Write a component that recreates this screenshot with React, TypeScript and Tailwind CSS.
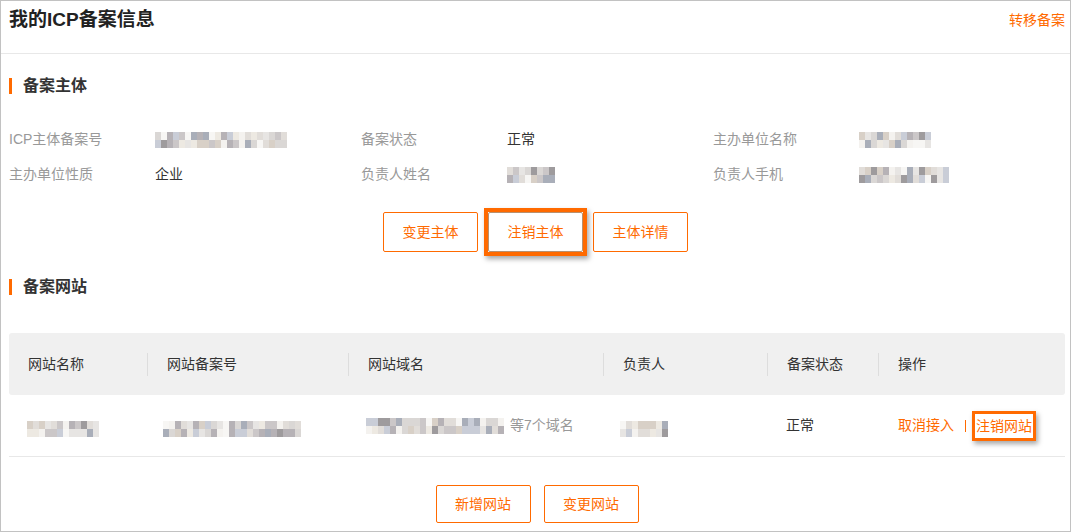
import type { ReactNode } from "react"

const ORANGE = "text-[#ff6a00]"

// ─── Mosaic placeholder for masked values ───────────────────────────────────

const PALETTE = [
  "#f4f2ef", "#e7e5e3", "#dad7d5", "#cbc7c8", "#b6b2b6", "#a9aeb9",
  "#d8d0c7", "#c9cdd7", "#ede9e2", "#9e9b9d", "#e1ddd9", "#f7f6f4",
]

function Mosaic({ w, seed = 1 }: { w: number; seed?: number }) {
  const cols = Math.ceil(w / 6)
  let s = seed * 9301 + 49297
  const next = () => {
    s = (s * 9301 + 49297) % 233280
    return s / 233280
  }
  const rows = [0, 1].map(() =>
    Array.from({ length: cols }, () => PALETTE[Math.floor(next() * PALETTE.length)]),
  )
  return (
    <span className="inline-flex flex-col blur-[0.4px]" style={{ width: w }}>
      {rows.map((r, i) => (
        <span key={i} className="flex h-[8px]">
          {r.map((c, j) => (
            <span key={j} className="h-full w-[6px] shrink-0" style={{ background: c }} />
          ))}
        </span>
      ))}
    </span>
  )
}

// ─── Bits ────────────────────────────────────────────────────────────────────

function SectionTitle({ children }: { children: ReactNode }) {
  return (
    <div className="flex h-[24px] items-center">
      <span className="h-[16px] w-[3px] bg-[#ff6a00]" />
      <span className="ml-[11px] text-[16px] font-bold text-[#333]">{children}</span>
    </div>
  )
}

function Highlight({ children, thin }: { children: ReactNode; thin?: boolean }) {
  return (
    <span className="relative inline-flex">
      {children}
      <span
        className={
          thin
            ? "pointer-events-none absolute -inset-[4px] border-[3px] border-[#ff6a00] shadow-[2px_3px_5px_rgba(0,0,0,0.35)]"
            : "pointer-events-none absolute -inset-[4px] border-4 border-[#ff6a00] shadow-[2px_3px_5px_rgba(0,0,0,0.35)]"
        }
      />
    </span>
  )
}

function OutlineButton({ children, dim, short }: { children: ReactNode; dim?: boolean; short?: boolean }) {
  return (
    <button
      className={
        (short ? "h-[38px] " : "h-[40px] ") +
        "w-[95px] rounded-[2px] border bg-white text-[14px] text-[#ff6a00] " +
        (dim ? "border-[#b8906f]" : "border-[#ff6a00]")
      }
    >
      {children}
    </button>
  )
}

function InfoCell({ label, children }: { label: string; children: ReactNode }) {
  return (
    <div className="flex h-[35px] items-center">
      <span className="w-[146px] text-[14px] text-[#999]">{label}</span>
      <span className="flex items-center text-[14px] text-[#333]">{children}</span>
    </div>
  )
}

const COLS = [
  { title: "网站名称", w: "w-[138px]" },
  { title: "网站备案号", w: "w-[201px]" },
  { title: "网站域名", w: "w-[255px]" },
  { title: "负责人", w: "w-[164px]" },
  { title: "备案状态", w: "w-[111px]" },
  { title: "操作", w: "flex-1" },
]

// ─── Page ────────────────────────────────────────────────────────────────────

export default function App() {
  return (
    <div className="h-[532px] w-[1074px] bg-white">
      <div className="h-[532px] w-[1071px] border border-[#c2c2c2] bg-white font-['Liberation_Sans','Noto_Sans_CJK_SC',sans-serif]">
        {/* Header */}
        <div className="flex h-[53px] items-start justify-between border-b border-[#e8e8e8] pl-[8px] pr-[5px] pt-[8px]">
          <h1 className="text-[19px] font-bold leading-[22px] text-[#222]">我的ICP备案信息</h1>
          <a className={"text-[14px] leading-[22px] " + ORANGE}>转移备案</a>
        </div>

        <div className="pl-[8px] pr-[5px]">
          {/* 备案主体 */}
          <div className="mt-[20px]">
            <SectionTitle>备案主体</SectionTitle>
          </div>

          <div className="mt-[24px] grid grid-cols-[352px_352px_1fr]">
            <InfoCell label="ICP主体备案号">
              <Mosaic w={132} seed={3} />
            </InfoCell>
            <InfoCell label="备案状态">正常</InfoCell>
            <InfoCell label="主办单位名称">
              <Mosaic w={70} seed={7} />
            </InfoCell>
            <InfoCell label="主办单位性质">企业</InfoCell>
            <InfoCell label="负责人姓名">
              <Mosaic w={46} seed={11} />
            </InfoCell>
            <InfoCell label="负责人手机">
              <Mosaic w={86} seed={5} />
            </InfoCell>
          </div>

          <div className="mt-[20px] flex justify-center gap-[10px] pr-[3px]">
            <OutlineButton>变更主体</OutlineButton>
            <Highlight>
              <OutlineButton dim>注销主体</OutlineButton>
            </Highlight>
            <OutlineButton>主体详情</OutlineButton>
          </div>

          {/* 备案网站 */}
          <div className="mt-[23px]">
            <SectionTitle>备案网站</SectionTitle>
          </div>

          <div className="mt-[34px]">
            <div className="flex h-[62px] items-center rounded-[3px] bg-[#f0f0f0]">
              {COLS.map((c, i) => (
                <div key={c.title} className={c.w + " flex h-full items-center"}>
                  {i > 0 && <span className="h-[23px] w-px bg-[#dddddd]" />}
                  <span className="pl-[19px] text-[14px] text-[#333]">{c.title}</span>
                </div>
              ))}
            </div>

            <div className="flex h-[62px] items-center border-b border-[#e8e8e8] text-[14px]">
              <div className="w-[138px] pl-[18px]">
                <Mosaic w={68} seed={13} />
              </div>
              <div className="w-[201px] pl-[16px]">
                <Mosaic w={138} seed={17} />
              </div>
              <div className="flex w-[255px] items-center pl-[18px]">
                <Mosaic w={134} seed={19} />
                <span className="ml-[10px] text-[#999]">等7个域名</span>
              </div>
              <div className="w-[164px] pl-[17px]">
                <Mosaic w={48} seed={23} />
              </div>
              <div className="w-[111px] pl-[19px] text-[#333]">正常</div>
              <div className="flex flex-1 items-center pl-[20px]">
                <a className={ORANGE}>取消接入</a>
                <span className="ml-[11px] h-[12px] w-px bg-[#ff6a00]" />
                <span className="ml-[10px]">
                  <Highlight thin>
                    <a className={"leading-[22px] " + ORANGE}>注销网站</a>
                  </Highlight>
                </span>
              </div>
            </div>
          </div>

          <div className="mt-[28px] flex justify-center gap-[13px]">
            <OutlineButton short>新增网站</OutlineButton>
            <OutlineButton short>变更网站</OutlineButton>
          </div>
        </div>
      </div>
    </div>
  )
}
